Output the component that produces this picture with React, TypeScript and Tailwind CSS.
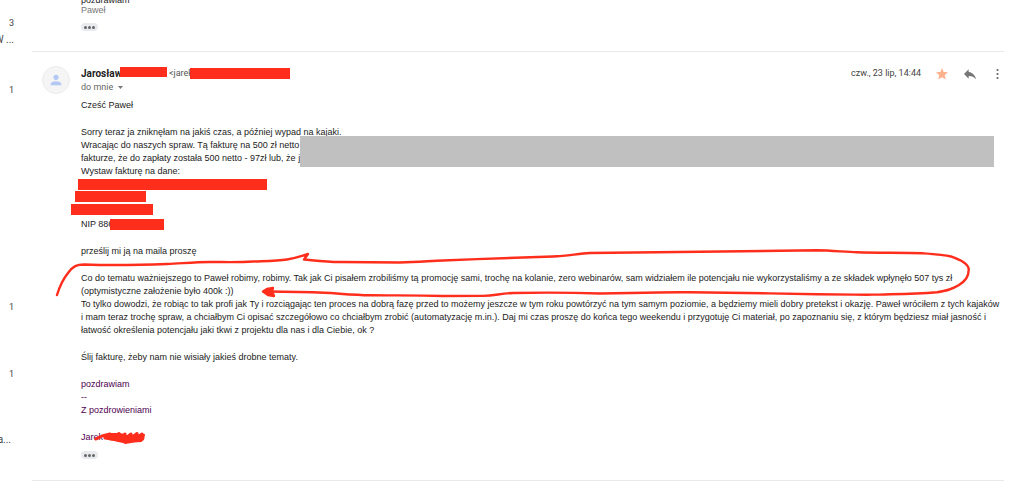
import { ReactElement } from 'react';

const threads = [
  { id: 1, count: '3', subject: 'W ...', space: 'h-[67px]', width: 'w-[14px]' },
  { id: 2, count: '1', subject: '', space: 'h-[217px]', width: 'w-[14px]' },
  { id: 3, count: '1', subject: '', space: 'h-[67px]', width: 'w-[14px]' },
  { id: 4, count: '1', subject: '', space: 'h-[49px]', width: 'w-[14px]' },
  { id: 5, count: '', subject: 'a...', space: 'h-[49px]', width: 'w-[11px]' },
];

const ThreadList = (): ReactElement => (
  <aside className="w-8 shrink-0 overflow-hidden pt-[17px] text-[#444]">
    {threads.map((thread) => (
      <div key={thread.id} className={thread.space}>
        <p className="h-[12px] pr-[18px] text-right text-[9px] leading-[12px]">{thread.count}</p>
        <p className={`mt-[5px] flex h-[12px] justify-end whitespace-nowrap text-[10px] leading-[12px] ${thread.width}`}>{thread.subject}</p>
      </div>
    ))}
  </aside>
);

const MoreButton = (): ReactElement => (
  <button className="flex h-2 w-[17px] items-center justify-center gap-px rounded-full bg-[#e8eaed]" type="button" aria-label="Pokaż przyciętą treść">
    <span className="size-[3px] rounded-full bg-[#666]" />
    <span className="size-[3px] rounded-full bg-[#666]" />
    <span className="size-[3px] rounded-full bg-[#666]" />
  </button>
);

const Avatar = (): ReactElement => (
  <div className="flex size-7 shrink-0 items-center justify-center rounded-full border border-[#ececec] bg-[#f5f5f5]">
    <svg className="size-4" viewBox="0 0 24 24" fill="#b3c8f3" aria-hidden="true">
      <path d="M12 12c2.2 0 4-1.8 4-4s-1.8-4-4-4-4 1.8-4 4 1.8 4 4 4zm0 2c-2.7 0-8 1.3-8 4v2h16v-2c0-2.7-5.300-4-8-4z" />
    </svg>
  </div>
);

const MessageHeader = (): ReactElement => (
  <header className="flex items-start">
    <Avatar />
    <div className="ml-[11px] pt-px">
      <div className="flex h-[13px] items-center whitespace-nowrap text-[#222]">
        <h3 className="relative w-[88px] text-[10px] leading-[13px] font-bold">
          Jarosław
          <span className="absolute top-0 left-[39px] h-[10px] w-[47px] bg-[#ff2d1c]" />
        </h3>
        <span className="relative text-[9px] leading-[13px] text-[#555]">
          &lt;jarek
          <span className="absolute top-px left-[21px] h-[11px] w-[100px] bg-[#ff2d1c]" />
        </span>
      </div>
      <button className="flex items-center gap-[5px] text-[9px] leading-[14px] text-[#666]" type="button">
        do mnie
        <svg className="h-[3px] w-[5px]" viewBox="0 0 10 6" fill="#777" aria-hidden="true">
          <path d="M0 0h10L5 6z" />
        </svg>
      </button>
    </div>
    <div className="ml-auto flex items-center pt-px">
      <time className="mr-[15px] text-[9px] leading-[13px] text-[#444]">czw., 23 lip, 14:44</time>
      <button className="mr-[15px]" type="button" aria-label="Oznaczone gwiazdką">
        <svg className="size-3" viewBox="2 2 20 20" fill="#fdb18d" aria-hidden="true">
          <path d="M12 17.270 18.180 21l-1.640-7.030L22 9.240l-7.190-.61L12 2 9.190 8.630 2 9.240l5.460 4.730L5.820 21z" />
        </svg>
      </button>
      <button className="mr-[13px]" type="button" aria-label="Odpowiedz">
        <svg className="h-3 w-[14px]" viewBox="2 3 20 18" fill="#777" aria-hidden="true">
          <path d="M10 9V5l-7 7 7 7v-4.100c5 0 8.500 1.600 11 5.100-1-5-4-10-11-11z" />
        </svg>
      </button>
      <button className="flex w-[14px] justify-center" type="button" aria-label="Więcej">
        <svg className="h-3 w-[3px]" viewBox="0 0 3 12" fill="#666" aria-hidden="true">
          <circle cx="1.500" cy="2" r="1.100" />
          <circle cx="1.500" cy="6" r="1.100" />
          <circle cx="1.500" cy="10" r="1.100" />
        </svg>
      </button>
    </div>
  </header>
);

// Hand drawn loop with an arrow around the highlighted sentence
const PenLoop = (): ReactElement => (
  <svg className="pointer-events-none absolute -top-[25px] -left-[30px] h-[54px] w-[930px]" viewBox="51 247 930 54" fill="none" stroke="#ff2d1c" strokeWidth="2.400" strokeLinecap="round" strokeLinejoin="round" aria-hidden="true">
    <path d="M57 295C60 285 64 278 68 273C73 266 77 264.500 84 264.500C112 265.500 140 265 167 264C181 263.500 194 262 210 262C225 262 239 262.500 253 261.500C266 261 277 261 287 259.500C296 258 301 256 308 254L304 259.500C315 260.500 325 262 340 262L400 262.500C418 262 430 261 443 260.500C480 259 520 257.500 553 256.500C568 256 578 253.500 590 253C625 252.500 660 252 700 251.700C740 251 780 250.500 817 250.300C832 250.500 845 252 857 252.300C880 253 905 252.500 923 253.300C935 254 944 254.500 951 256.500C960 260 968 263 968.700 269C969 277 965 281 959 285C951 290 945 291 937 292.300C922 293.500 905 294 890 294.300C880 295 873 294.300 867 294.700C850 294.500 832 294.500 817 294.200C775 293.500 730 292.500 690 292.300C675 292 650 292.500 630 293L600 293.500C570 292.500 540 292.500 513 293C500 293.500 495 295.700 483 295.900L443 296C418 295 395 295.500 370 295.300C350 295 330 292.500 313 292.300L268 291.500" />
    <path d="M263 291.500 267 289 273 288 272 291.500 274 296 268 295z" fill="#ff2d1c" />
  </svg>
);

const Scribble = (): ReactElement => (
  <svg className="pointer-events-none absolute -top-px left-[13px] h-[15px] w-[52px]" viewBox="94 429 52 15" fill="none" stroke="#ff2d1c" strokeWidth="3" strokeLinecap="round" strokeLinejoin="round" aria-hidden="true">
    <path d="M96 438 102 435 110 433 105 437 112 438 119 432.500 110 438 118 439 125 433 116 439 126 441 131 433 122 440 126 441.500 137 432.500 128 441 134 440 142 433 134 440 141 439.500 143.500 434" />
    <path d="M110 435.500H120L127 437.500 141 436.500" strokeWidth="7" />
  </svg>
);

const MessageBody = (): ReactElement => (
  <div className="flex flex-col gap-[14px] text-[9px] leading-[13px] whitespace-nowrap text-[#222]">
    <p>Cześć Paweł</p>
    <div>
      <p>Sorry teraz ja zniknęłam na jakiś czas, a później wypad na kajaki.</p>
      <div className="relative">
        <p>Wracając do naszych spraw. Tą fakturę na 500 zł netto</p>
        <p>fakturze, że do zapłaty została 500 netto - 97zł lub, że j</p>
        <span className="absolute -top-[3px] right-[10px] left-[219px] h-[31px] bg-[#c0c0c0]" />
      </div>
      <p>Wystaw fakturę na dane:</p>
      <div className="flex h-10 flex-col gap-px pt-px">
        <span className="-ml-[3px] h-[11px] w-[189px] bg-[#ff2d1c]" />
        <span className="-ml-[6px] h-[11px] w-[71px] bg-[#ff2d1c]" />
        <span className="mt-px -ml-[10px] h-[11px] w-[82px] bg-[#ff2d1c]" />
      </div>
      <p className="relative">
        NIP 886
        <span className="absolute top-px left-[29px] h-[11px] w-[54px] bg-[#ff2d1c]" />
      </p>
    </div>
    <p>prześlij mi ją na maila proszę</p>
    <div className="relative">
      <p>
        Co do tematu ważniejszego to Paweł robimy, robimy. Tak jak Ci pisałem zrobiliśmy tą promocję sami, trochę na kolanie, zero webinarów, sam widziałem ile potencjału nie wykorzystaliśmy a ze składek wpłynęło 507 tys zł<br />
        (optymistyczne założenie było 400k :))
      </p>
      <p>
        To tylko dowodzi, że robiąc to tak profi jak Ty i rozciągając ten proces na dobrą fazę przed to możemy jeszcze w tym roku powtórzyć na tym samym poziomie, a będziemy mieli dobry pretekst i okazję. Paweł wróciłem z tych kajaków<br />
        i mam teraz trochę spraw, a chciałbym Ci opisać szczegółowo co chciałbym zrobić (automatyzację m.in.). Daj mi czas proszę do końca tego weekendu i przygotuję Ci materiał, po zapoznaniu się, z którym będziesz miał jasność i<br />
        łatwość określenia potencjału jaki tkwi z projektu dla nas i dla Ciebie, ok ?
      </p>
      <PenLoop />
    </div>
    <p>Ślij fakturę, żeby nam nie wisiały jakieś drobne tematy.</p>
    <p className="text-[#500050]">
      pozdrawiam<br />
      --<br />
      Z pozdrowieniami
    </p>
    <p className="relative text-[#500050]">
      Jarek
      <Scribble />
    </p>
  </div>
);

const App = (): ReactElement => {
  return (
    <div className="flex overflow-hidden bg-white font-['Roboto',sans-serif]">
      <ThreadList />
      <main className="min-w-0 grow pr-5">
        <section className="border-b border-[#e9e9e9] pb-5 pl-[49px] font-['Liberation_Sans',sans-serif] text-[9px] leading-[10px]">
          <p className="-mt-[5px] text-[#222]">pozdrawiam</p>
          <p className="mb-2 text-[#777]">Paweł</p>
          <MoreButton />
        </section>
        <article className="border-b border-[#e9e9e9] pt-[14px] pb-[21px] pl-[10px]">
          <MessageHeader />
          <div className="mt-[5px] pl-[39px] font-['Liberation_Sans',sans-serif]">
            <MessageBody />
            <div className="mt-[7px]">
              <MoreButton />
            </div>
          </div>
        </article>
      </main>
    </div>
  )
}

export default App;
